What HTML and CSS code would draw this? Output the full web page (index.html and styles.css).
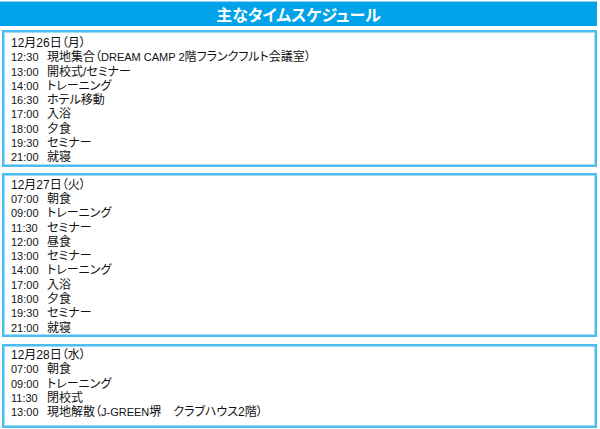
FILE: index.html
```html
<!DOCTYPE html>
<html lang="ja">
<head>
<meta charset="utf-8">
<link rel="stylesheet" href="styles.css">
</head>
<body>
<div class="page">
  <h1 class="title">主なタイムスケジュール</h1>
  <section class="day day-first">
    <div class="date">12月26日（月）</div>
    <div class="row"><span class="time">12:30</span><span class="ev">現地集合（<span class="latin">DREAM CAMP 2</span>階フランクフルト会議室）</span></div>
    <div class="row"><span class="time">13:00</span><span class="ev">開校式/セミナー</span></div>
    <div class="row"><span class="time">14:00</span><span class="ev">トレーニング</span></div>
    <div class="row"><span class="time">16:30</span><span class="ev">ホテル移動</span></div>
    <div class="row"><span class="time">17:00</span><span class="ev">入浴</span></div>
    <div class="row"><span class="time">18:00</span><span class="ev">夕食</span></div>
    <div class="row"><span class="time">19:30</span><span class="ev">セミナー</span></div>
    <div class="row"><span class="time">21:00</span><span class="ev">就寝</span></div>
  </section>
  <section class="day day-second">
    <div class="date">12月27日（火）</div>
    <div class="row"><span class="time">07:00</span><span class="ev">朝食</span></div>
    <div class="row"><span class="time">09:00</span><span class="ev">トレーニング</span></div>
    <div class="row"><span class="time">11:30</span><span class="ev">セミナー</span></div>
    <div class="row"><span class="time">12:00</span><span class="ev">昼食</span></div>
    <div class="row"><span class="time">13:00</span><span class="ev">セミナー</span></div>
    <div class="row"><span class="time">14:00</span><span class="ev">トレーニング</span></div>
    <div class="row"><span class="time">17:00</span><span class="ev">入浴</span></div>
    <div class="row"><span class="time">18:00</span><span class="ev">夕食</span></div>
    <div class="row"><span class="time">19:30</span><span class="ev">セミナー</span></div>
    <div class="row"><span class="time">21:00</span><span class="ev">就寝</span></div>
  </section>
  <section class="day day-third">
    <div class="date">12月28日（水）</div>
    <div class="row"><span class="time">07:00</span><span class="ev">朝食</span></div>
    <div class="row"><span class="time">09:00</span><span class="ev">トレーニング</span></div>
    <div class="row"><span class="time">11:30</span><span class="ev">閉校式</span></div>
    <div class="row"><span class="time">13:00</span><span class="ev">現地解散（<span class="latin">J-GREEN</span>堺　クラブハウス2階）</span></div>
  </section>
</div>
</body>
</html>
```
FILE: styles.css
```css
html, body {
  margin: 0;
  padding: 0;
  background: #ffffff;
}
.page {
  width: 600px;
  height: 429px;
  overflow: hidden;
  display: flex;
  flex-direction: column;
  font-family: "Liberation Sans", "Noto Sans CJK JP", sans-serif;
  font-feature-settings: "palt";
  color: #111111;
  font-size: 12px;
}
.title {
  margin: 1px 3px 0 0;
  height: 24px;
  background: #00a2e8;
  border-top: 1px solid #8fd6f5;
  color: #ffffff;
  font-family: "Noto Sans CJK JP", sans-serif;
  font-feature-settings: "palt";
  font-size: 16px;
  font-weight: bold;
  line-height: 24px;
  text-align: center;
}
.day {
  flex: none;
  margin: 0 3px 0 2px;
  border: 2px solid #4cbdf0;
  box-shadow: inset 0 0 0 1px #9fdcf7;
  padding: 3px 6px 0 7px;
  line-height: 14.3px;
}
.day-first {
  margin-top: 4px;
  padding-top: 4px;
}
.day-second {
  margin-top: 6px;
}
.day-third {
  margin-top: 7px;
  padding-top: 2px;
  padding-bottom: 7px;
}
.row {
  display: flex;
}
.time {
  width: 36px;
  flex: none;
  font-size: 11px;
}
.latin {
  font-size: 11px;
}
```
